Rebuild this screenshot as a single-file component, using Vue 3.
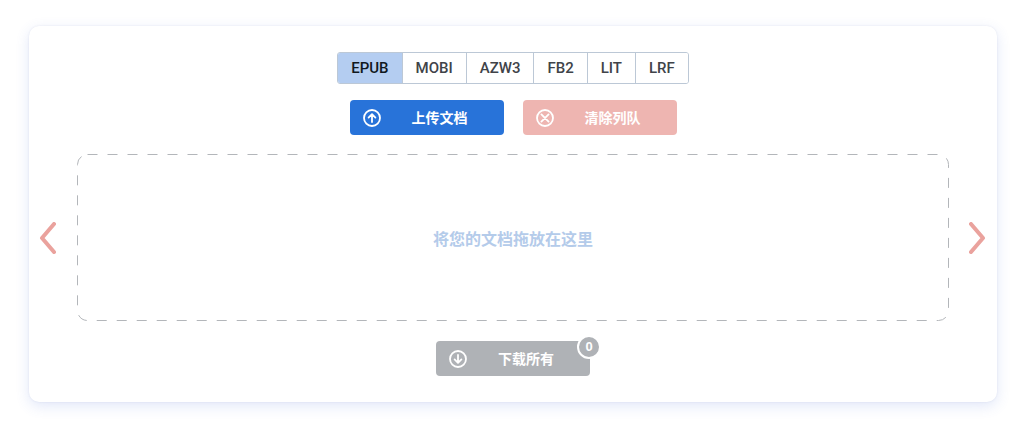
<script setup>
import { ref } from 'vue'

const formats = ['EPUB', 'MOBI', 'AZW3', 'FB2', 'LIT', 'LRF']
const active = ref('EPUB')
const ready = ref(0)
</script>

<template>
  <main class="card">
    <nav class="formats" aria-label="格式">
      <button
        v-for="f in formats"
        :key="f"
        type="button"
        class="format"
        :class="{ active: f === active }"
        :aria-pressed="f === active"
        @click="active = f"
      >{{ f }}</button>
    </nav>

    <div class="actions">
      <button type="button" class="action upload">
        <svg class="icon" viewBox="0 0 18 18" aria-hidden="true">
          <circle cx="9" cy="9" r="8" />
          <path d="M9 13V5.4M5.6 8.6L9 5.2l3.4 3.4" />
        </svg>
        <span class="label">上传文档</span>
      </button>
      <button type="button" class="action clear">
        <svg class="icon" viewBox="0 0 18 18" aria-hidden="true">
          <circle cx="9" cy="9" r="8" />
          <path d="M5.4 5.4l7.2 7.2M12.6 5.4l-7.2 7.2" />
        </svg>
        <span class="label">清除列队</span>
      </button>
    </div>

    <div class="queue">
      <button type="button" class="arrow previous" aria-label="上一页">
        <svg viewBox="0 0 17 32" aria-hidden="true"><path d="M15 2L3 16l12 14" /></svg>
      </button>
      <section class="dropzone">
        <svg class="outline" aria-hidden="true">
          <rect x="0.5" y="0.5" width="100%" height="100%" rx="10" />
        </svg>
        <p class="hint">将您的文档拖放在这里</p>
      </section>
      <button type="button" class="arrow next" aria-label="下一页">
        <svg viewBox="0 0 17 32" aria-hidden="true"><path d="M2 2l12 14L2 30" /></svg>
      </button>
    </div>

    <div class="download">
      <button type="button" class="action all">
        <svg class="icon" viewBox="0 0 18 18" aria-hidden="true">
          <circle cx="9" cy="9" r="8" />
          <path d="M9 5v7.6M5.6 9.4L9 12.8l3.4-3.4" />
        </svg>
        <span class="label">下载所有</span>
        <span class="badge">{{ ready }}</span>
      </button>
    </div>
  </main>
</template>

<style>
body {
  background: #fff;
}
</style>

<style scoped>
.card {
  margin: 26px 27px 24px 29px;
  padding: 26px 0;
  border-radius: 10px;
  background: #fff;
  box-shadow: 0 4px 14px rgba(70, 105, 215, 0.16), 0 0 2px rgba(70, 90, 150, 0.12);
  font-family: "Liberation Sans", "Noto Sans CJK SC", sans-serif;
  display: flex;
  flex-direction: column;
}

button {
  margin: 0;
  border: 0;
  font-family: inherit;
  font-weight: 700;
  cursor: pointer;
}

.formats {
  align-self: center;
  display: flex;
  border: 1px solid #bcc8d6;
  border-radius: 3px;
  overflow: hidden;
}

.format {
  height: 30px;
  padding: 0 13px;
  background: #fff;
  color: #404349;
  font-family: Roboto, "Liberation Sans", sans-serif;
  font-size: 15px;
  font-weight: 500;
  line-height: 30px;
}

.format + .format {
  border-left: 1px solid #bcc8d6;
}

.format.active {
  background: #b4cdf1;
  color: #101820;
}

.actions {
  display: flex;
  justify-content: center;
  gap: 19px;
  margin-top: 16px;
}

.action {
  position: relative;
  display: flex;
  align-items: center;
  width: 154px;
  height: 35px;
  padding: 0 13px;
  border-radius: 4px;
  color: #fff;
  font-size: 14px;
}

.upload {
  background: #2873d9;
}

.clear {
  background: #eeb5b1;
}

.all {
  background: #afb2b6;
}

.icon {
  flex: none;
  width: 18px;
  height: 18px;
  fill: none;
  stroke: currentColor;
  stroke-width: 1.8;
  stroke-linecap: round;
  stroke-linejoin: round;
}

.label {
  flex: 1;
  padding: 0 0 2px 8px;
  text-align: center;
}

.queue {
  display: grid;
  grid-template-columns: 48px 1fr 48px;
  margin-top: 19px;
}

.arrow {
  display: flex;
  align-items: center;
  padding: 0 11px 0 10px;
  background: transparent;
}

.next {
  justify-content: flex-end;
}

.arrow svg {
  width: 17px;
  height: 32px;
  fill: none;
  stroke: #eaa29d;
  stroke-width: 4;
  stroke-linecap: round;
  stroke-linejoin: round;
}

.dropzone {
  display: grid;
  place-items: center;
  min-height: 167px;
}

.outline,
.hint {
  grid-area: 1 / 1;
}

.outline {
  justify-self: stretch;
  align-self: stretch;
  width: calc(100% - 1px);
  height: calc(100% - 1px);
  overflow: visible;
  fill: none;
  stroke: #b3b6ba;
  stroke-width: 1;
  stroke-dasharray: 10 10;
}

.hint {
  margin: 0;
  padding-top: 4px;
  color: #b4cbea;
  font-size: 16px;
  font-weight: 700;
  line-height: 24px;
}

.download {
  display: flex;
  justify-content: center;
  margin-top: 20px;
}

.badge {
  position: absolute;
  top: -6px;
  right: -11px;
  box-sizing: border-box;
  width: 24px;
  height: 24px;
  border: 2px solid #fff;
  border-radius: 50%;
  background: #afb2b6;
  font-size: 13px;
  line-height: 20px;
  text-align: center;
}
</style>
